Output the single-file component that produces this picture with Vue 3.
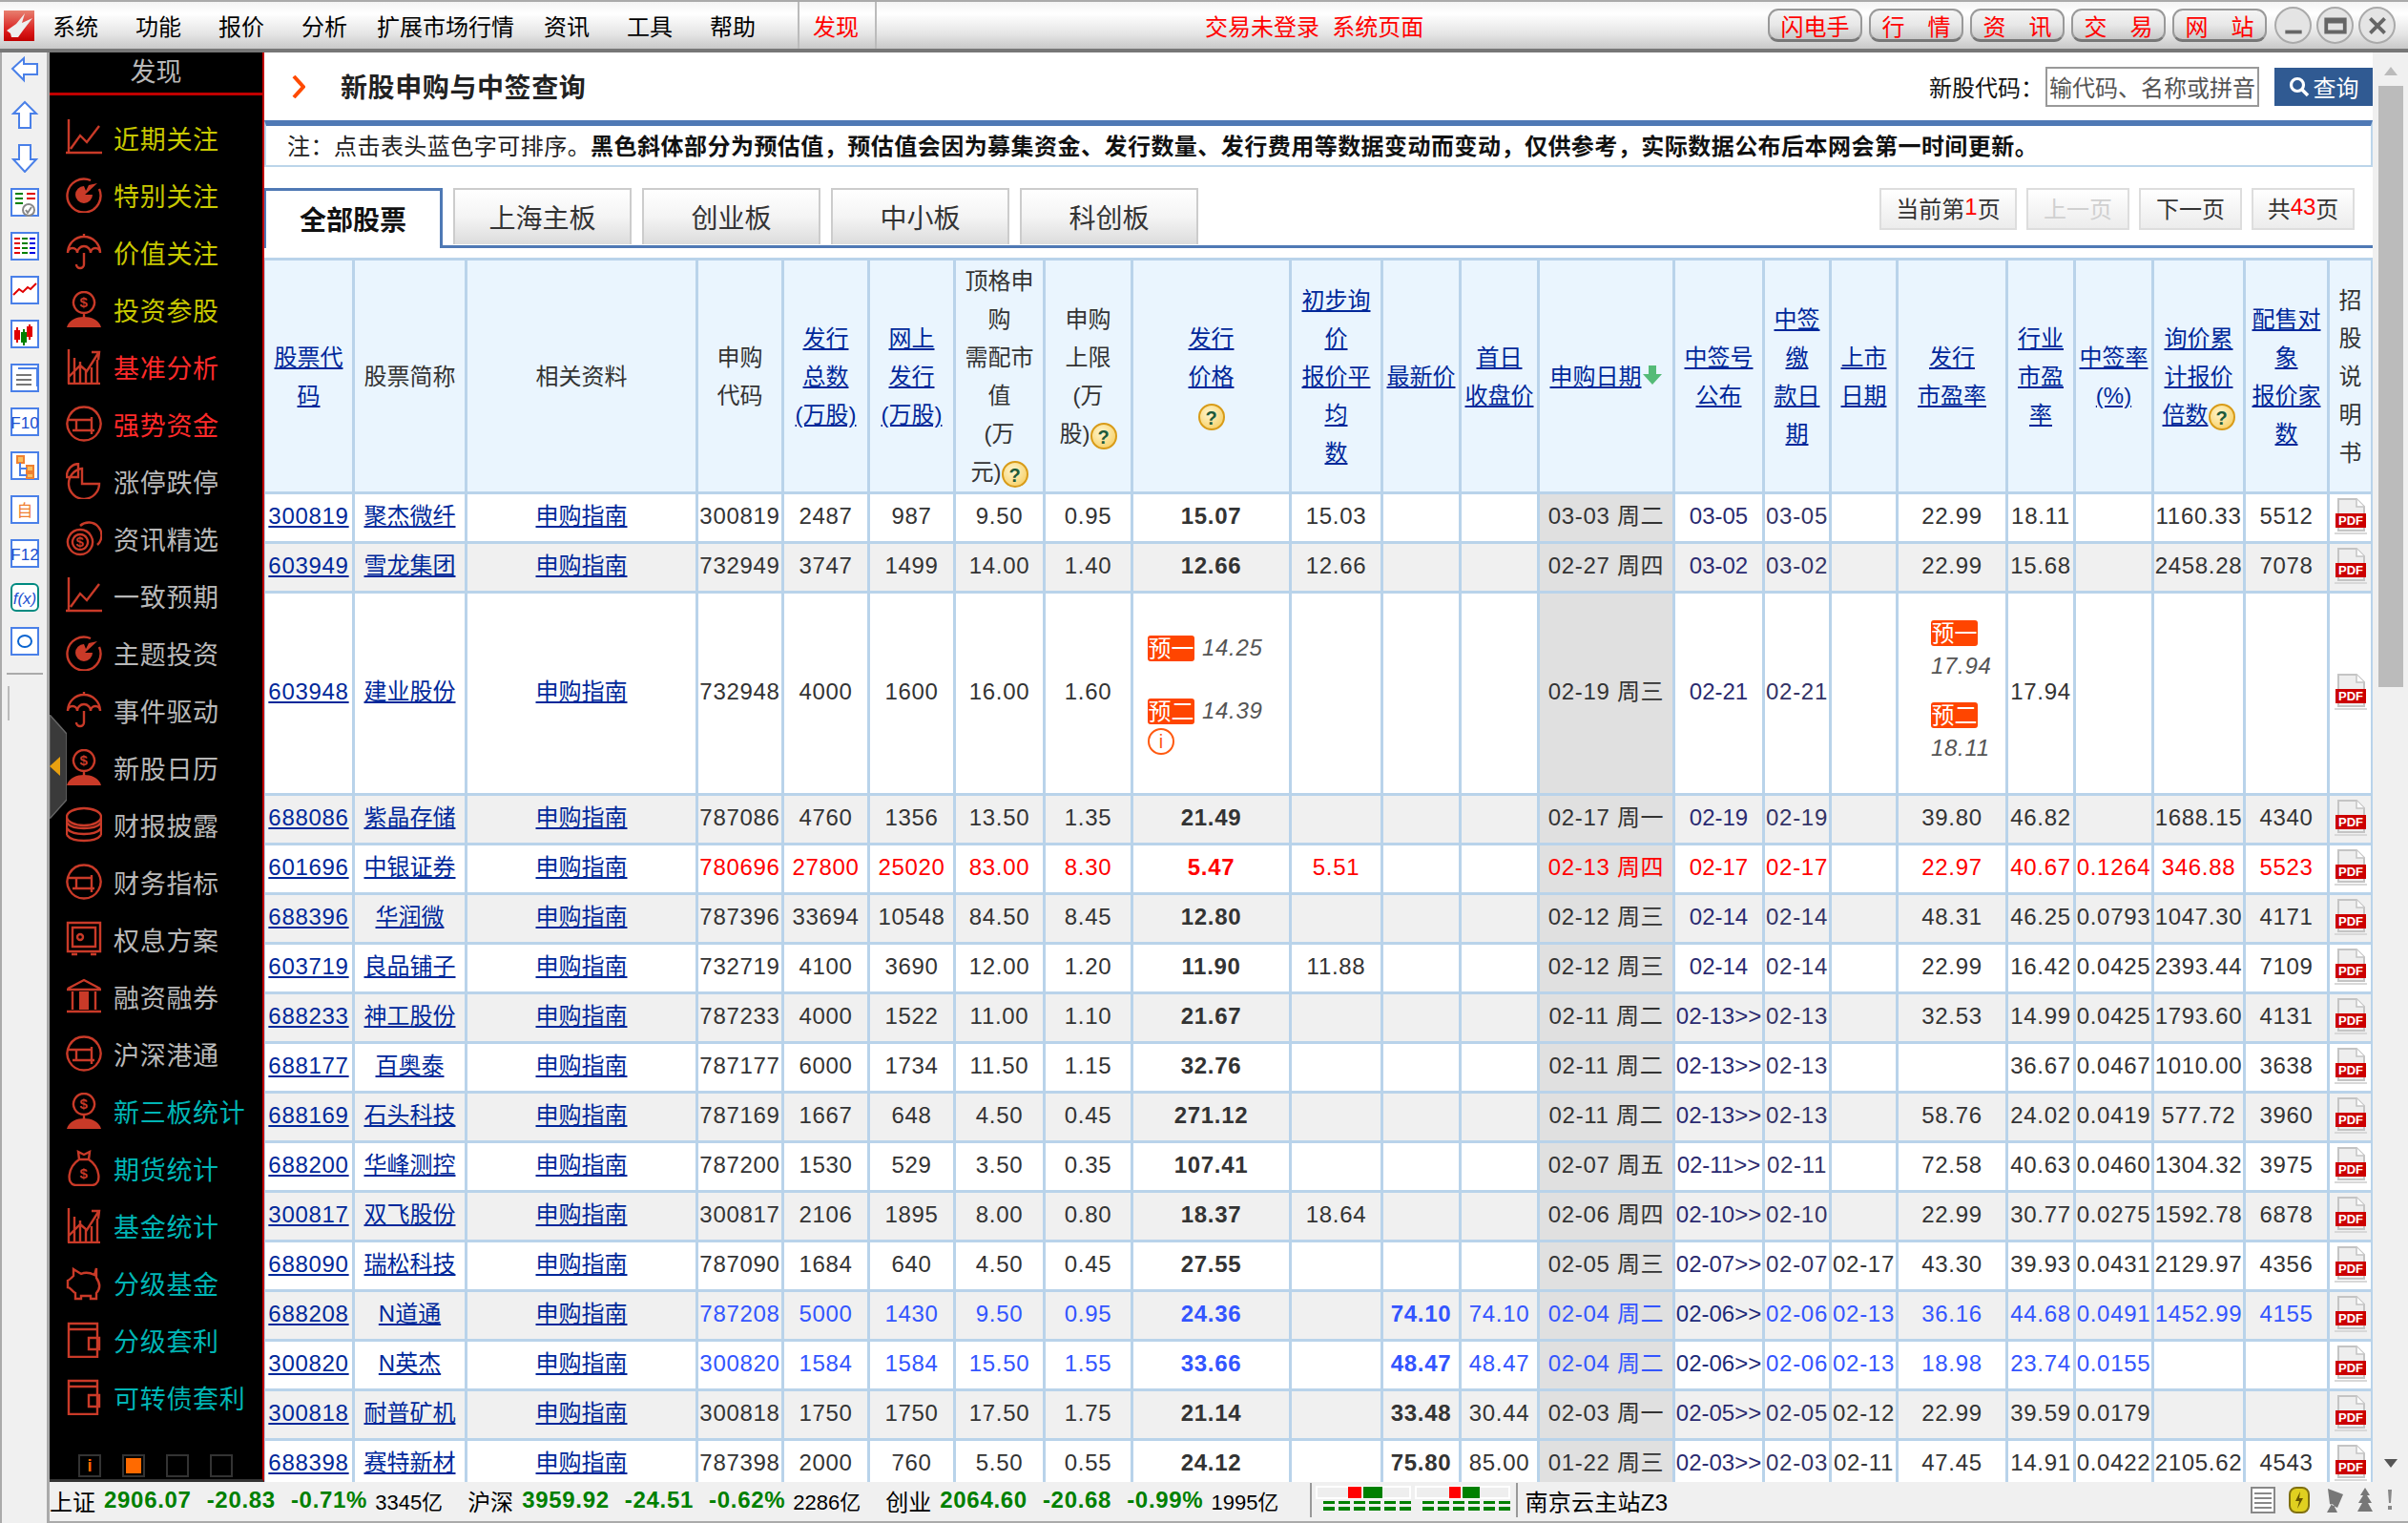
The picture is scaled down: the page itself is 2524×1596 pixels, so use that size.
<script setup>
const menus = ['系统', '功能', '报价', '分析', '扩展市场行情', '资讯', '工具', '帮助']
const quick = ['闪电手', '行　情', '资　讯', '交　易', '网　站']

// 左侧工具条
const tools = [
  { paths: [{ d: 'M2 13L14 2V8H28V19H14V25Z', c: '#4a80e8', f: '#fff' }] },
  { paths: [{ d: 'M15 2L27 14H21V29H9V14H3Z', c: '#4a80e8', f: '#fff' }] },
  { paths: [{ d: 'M9 1H21V16H27L15 29L3 16H9Z', c: '#4a80e8', f: '#fff' }] },
  { box: 1, paths: [
    { d: 'M5 6H13M5 11H13M5 16H13', c: '#008000' }, { d: 'M17 6H26M17 11H26', c: '#e00000' },
    { d: 'M13 23a6 6 0 1 1 12 0a6 6 0 1 1-12 0M16 23l2 3l4-6', c: '#888' }] },
  { box: 1, paths: [
    { d: 'M4 7H10M4 12H10M4 17H10M4 22H10', c: '#e00000' }, { d: 'M12 7H18M12 12H18M12 17H18M12 22H18', c: '#008000' },
    { d: 'M20 7H26M20 12H26M20 17H26M20 22H26', c: '#0000e0' }] },
  { box: 1, paths: [{ d: 'M3 20L9 14L13 17L18 12L21 14L27 8', c: '#e00000' }] },
  { box: 1, paths: [
    { d: 'M7 8V24M20 5V21', c: '#e00000' }, { d: 'M14 10V27', c: '#008000' }, { d: 'M5 12H9V20H5ZM18 8H22V17H18Z', c: '#e00000', f: '#e00000' },
    { d: 'M12 14H16V23H12Z', c: '#008000', f: '#008000' }] },
  { box: 1, paths: [{ d: 'M6 12H22M6 17H22M6 22H22', c: '#777' }, { d: 'M8 5H28V24', c: '#4a80e8' }] },
  { box: 1, text: 'F10', tc: '#1a4fd0' },
  { box: 1, paths: [{ d: 'M7 5H14V12H7ZM17 15H24V21H17ZM17 23H24V28H17Z', c: '#f08030', f: '#f8c060' }, { d: 'M10 12V25H17M10 18H17', c: '#4a80e8' }] },
  { box: 1, text: '自', tc: '#f08030' },
  { box: 1, text: 'F12', tc: '#1a4fd0' },
  { box: 1, teal: 1, text: 'f(x)', tc: '#1a4fd0', it: 1 },
  { box: 1, paths: [{ d: 'M8 15a7 6 0 1 1 14 0a7 6 0 1 1-14 0', c: '#0a64d0' }] },
]

// 侧边栏图标
const icons = {
  chart: { s: 'M3 0V34M0 35H38M5 31L15 17L22 24L35 7' },
  target: { s: 'M26 4A17.5 17.5 0 1 0 35 13', f: 'M19 10A9 9 0 1 0 28 19H20L33 7L24 9L21 15Z' },
  umbrella: { s: 'M2 20A17 17 0 0 1 36 20M19 0V4M19 20V32A4 4 0 0 1 11 32M2 20a5 5 0 0 1 10 0a7 7 0 0 1 14 0a5 5 0 0 1 10 0' },
  person: { s: 'M19 1a11 11 0 1 0 .01 0M19 23V28', f: 'M1 38C3 30 12 27 19 27S35 30 37 38Z', t: 1, tx: 19, ty: 17 },
  bars: { s: 'M3 1V37M2 37H36M9 10V36M15 14V36M21 24V36M27 20V36M33 12V36M3 30L15 18L22 24L34 5M27 4L35 4L34 12' },
  box: { s: 'M19 1.5a17.5 17.5 0 1 0 .01 0M3 15H27M11 15V26M7 26H30M27 12V30' },
  pie: { s: 'M17 6A16 16 0 1 0 35 22H17ZM13 1A13 13 0 0 0 1 15H13Z' },
  coin: { s: 'M15 10a13 13 0 1 0 .01 0M15 15a8 8 0 1 0 .01 0M15 6A12 12 0 0 1 33 26', t: 1, tx: 15, ty: 28 },
  stack: { s: 'M1 11A18 9 0 0 1 37 11A18 9 0 0 1 1 11M1 11V30M37 11V30M1 17c6 8 30 8 36 0M1 23c6 8 30 8 36 0M1 30c6 8 30 8 36 0', t: 1, tx: 19, ty: 15 },
  safe: { s: 'M2 2H36V32H2ZM7 7H31V27H7ZM12 17a3 3 0 1 0 6 0a3 3 0 1 0-6 0M6 35H12M26 35H32' },
  bank: { s: 'M2 11L19 2L36 11M1 12H37M1 35H37M7 14V33M31 14V33', f: 'M14 14H24V33H14Z' },
  bag: { s: 'M13 2L19 5L25 2L24 10H14ZM14 10C2 18 0 36 10 37H28C38 36 36 18 24 10', t: 1, tx: 19, ty: 30 },
  pig: { s: 'M8 5L16 10C20 8 26 9 30 11L32 4V14C36 20 36 26 32 30V36H26V33H16V36H10V30C6 28 5 24 2 24V17C4 16 6 14 8 12Z' },
  wallet: { s: 'M3 2H33V37H3ZM3 8H33M24 17H35V29H24Z' },
}

const yellow = '#c8c800'
const red = '#ff2a2a'
const grey = '#b8b8b8'
const teal = '#00b5b5'
const sideItems = [
  ['近期关注', 'chart', yellow], ['特别关注', 'target', yellow], ['价值关注', 'umbrella', yellow], ['投资参股', 'person', yellow],
  ['基准分析', 'bars', red], ['强势资金', 'box', red], ['涨停跌停', 'pie', grey], ['资讯精选', 'coin', grey],
  ['一致预期', 'chart', grey], ['主题投资', 'target', grey], ['事件驱动', 'umbrella', grey], ['新股日历', 'person', grey],
  ['财报披露', 'stack', grey], ['财务指标', 'box', grey], ['权息方案', 'safe', grey], ['融资融券', 'bank', grey],
  ['沪深港通', 'box', grey], ['新三板统计', 'person', teal], ['期货统计', 'bag', teal], ['基金统计', 'bars', teal],
  ['分级基金', 'pig', teal], ['分级套利', 'wallet', teal], ['可转债套利', 'wallet', teal],
]

const tabs = ['全部股票', '上海主板', '创业板', '中小板', '科创板']

const colWidths = [94, 118, 242, 90, 90, 90, 94, 92, 166, 96, 82, 82, 142, 94, 70, 70, 115, 71, 82, 96, 88, 46]

const heads = [
  { l: ['股票代', '码'], a: 1 },
  { l: ['股票简称'] },
  { l: ['相关资料'] },
  { l: ['申购', '代码'] },
  { l: ['发行', '总数', '(万股)'], a: 1 },
  { l: ['网上', '发行', '(万股)'], a: 1 },
  { l: ['顶格申', '购', '需配市', '值', '(万', '元)'], help: 1 },
  { l: ['申购', '上限', '(万', '股)'], help: 1 },
  { l: ['发行', '价格', ''], a: 1, help: 1 },
  { l: ['初步询', '价', '报价平', '均', '数'], a: 1 },
  { l: ['最新价'], a: 1 },
  { l: ['首日', '收盘价'], a: 1 },
  { l: ['申购日期'], a: 1, sort: 1 },
  { l: ['中签号', '公布'], a: 1 },
  { l: ['中签', '缴', '款日', '期'], a: 1 },
  { l: ['上市', '日期'], a: 1 },
  { l: ['发行', '市盈率'], a: 1 },
  { l: ['行业', '市盈', '率'], a: 1 },
  { l: ['中签率', '(%)'], a: 1 },
  { l: ['询价累', '计报价', '倍数'], a: 1, help: 1 },
  { l: ['配售对', '象', '报价家', '数'], a: 1 },
  { l: ['招', '股', '说', '明', '书'] },
]

// 代码 简称 申购代码 总数 网上 市值 上限 价格 初询 最新 首日 日期 号公布 缴款 上市 发行PE 行业PE 中签率 倍数 家数
const rows = [
  { d: ['300819', '聚杰微纤', '300819', '2487', '987', '9.50', '0.95', '15.07', '15.03', '', '', '03-03 周二', '03-05', '03-05', '', '22.99', '18.11', '', '1160.33', '5512'] },
  { d: ['603949', '雪龙集团', '732949', '3747', '1499', '14.00', '1.40', '12.66', '12.66', '', '', '02-27 周四', '03-02', '03-02', '', '22.99', '15.68', '', '2458.28', '7078'] },
  { est: 1, d: ['603948', '建业股份', '732948', '4000', '1600', '16.00', '1.60', '', '', '', '', '02-19 周三', '02-21', '02-21', '', '', '17.94', '', '', ''] },
  { d: ['688086', '紫晶存储', '787086', '4760', '1356', '13.50', '1.35', '21.49', '', '', '', '02-17 周一', '02-19', '02-19', '', '39.80', '46.82', '', '1688.15', '4340'] },
  { c: 'red', d: ['601696', '中银证券', '780696', '27800', '25020', '83.00', '8.30', '5.47', '5.51', '', '', '02-13 周四', '02-17', '02-17', '', '22.97', '40.67', '0.1264', '346.88', '5523'] },
  { d: ['688396', '华润微', '787396', '33694', '10548', '84.50', '8.45', '12.80', '', '', '', '02-12 周三', '02-14', '02-14', '', '48.31', '46.25', '0.0793', '1047.30', '4171'] },
  { d: ['603719', '良品铺子', '732719', '4100', '3690', '12.00', '1.20', '11.90', '11.88', '', '', '02-12 周三', '02-14', '02-14', '', '22.99', '16.42', '0.0425', '2393.44', '7109'] },
  { d: ['688233', '神工股份', '787233', '4000', '1522', '11.00', '1.10', '21.67', '', '', '', '02-11 周二', '02-13>>', '02-13', '', '32.53', '14.99', '0.0425', '1793.60', '4131'] },
  { d: ['688177', '百奥泰', '787177', '6000', '1734', '11.50', '1.15', '32.76', '', '', '', '02-11 周二', '02-13>>', '02-13', '', '', '36.67', '0.0467', '1010.00', '3638'] },
  { d: ['688169', '石头科技', '787169', '1667', '648', '4.50', '0.45', '271.12', '', '', '', '02-11 周二', '02-13>>', '02-13', '', '58.76', '24.02', '0.0419', '577.72', '3960'] },
  { d: ['688200', '华峰测控', '787200', '1530', '529', '3.50', '0.35', '107.41', '', '', '', '02-07 周五', '02-11>>', '02-11', '', '72.58', '40.63', '0.0460', '1304.32', '3975'] },
  { d: ['300817', '双飞股份', '300817', '2106', '1895', '8.00', '0.80', '18.37', '18.64', '', '', '02-06 周四', '02-10>>', '02-10', '', '22.99', '30.77', '0.0275', '1592.78', '6878'] },
  { d: ['688090', '瑞松科技', '787090', '1684', '640', '4.50', '0.45', '27.55', '', '', '', '02-05 周三', '02-07>>', '02-07', '02-17', '43.30', '39.93', '0.0431', '2129.97', '4356'] },
  { c: 'blue', d: ['688208', 'N道通', '787208', '5000', '1430', '9.50', '0.95', '24.36', '', '74.10', '74.10', '02-04 周二', '02-06>>', '02-06', '02-13', '36.16', '44.68', '0.0491', '1452.99', '4155'] },
  { c: 'blue', d: ['300820', 'N英杰', '300820', '1584', '1584', '15.50', '1.55', '33.66', '', '48.47', '48.47', '02-04 周二', '02-06>>', '02-06', '02-13', '18.98', '23.74', '0.0155', '', ''] },
  { d: ['300818', '耐普矿机', '300818', '1750', '1750', '17.50', '1.75', '21.14', '', '33.48', '30.44', '02-03 周一', '02-05>>', '02-05', '02-12', '22.99', '39.59', '0.0179', '', ''] },
  { d: ['688398', '赛特新材', '787398', '2000', '760', '5.50', '0.55', '24.12', '', '75.80', '85.00', '01-22 周三', '02-03>>', '02-03', '02-11', '47.45', '14.91', '0.0422', '2105.62', '4543'] },
]

const indices = [
  { name: '上证', v: ['2906.07', '-20.83', '-0.71%'], amt: '3345亿' },
  { name: '沪深', v: ['3959.92', '-24.51', '-0.62%'], amt: '2286亿' },
  { name: '创业', v: ['2064.60', '-20.68', '-0.99%'], amt: '1995亿' },
]
const dashes = [0, 1, 2, 3, 4, 5]
</script>

<template>
  <div class="app">
    <header class="topbar">
      <svg class="logo" viewBox="0 0 32 32">
        <defs>
          <linearGradient id="lg" x1="0" y1="0" x2="0" y2="1">
            <stop offset="0" stop-color="#e88070" />
            <stop offset="0.7" stop-color="#d81818" />
            <stop offset="1" stop-color="#c00000" />
          </linearGradient>
        </defs>
        <rect width="32" height="32" fill="url(#lg)" />
        <path d="M3 21L13 14L22 3L19 13L30 8L20 21L15 28L8 28L7 24Z" fill="#eee" />
      </svg>
      <nav class="menu">
        <span v-for="m in menus" :key="m" :class="{ long: m.length > 2 }">{{ m }}</span>
      </nav>
      <span class="found">发现</span>
      <span class="login">交易未登录&nbsp;&nbsp;系统页面</span>
      <div class="quick">
        <span v-for="q in quick" :key="q" class="qbtn">{{ q }}</span>
      </div>
      <div class="winbtns">
        <span class="wbtn"><svg viewBox="0 0 24 24"><path d="M4 18H20" /></svg></span>
        <span class="wbtn"><svg viewBox="0 0 24 24"><path d="M3 6H21V18H3ZM3 8H21" /></svg></span>
        <span class="wbtn"><svg viewBox="0 0 24 24"><path d="M5 5L19 19M19 5L5 19" /></svg></span>
      </div>
    </header>

    <div class="body">
      <aside class="tools">
        <template v-for="(t, i) in tools" :key="i">
          <svg class="tool" viewBox="0 0 30 30">
            <rect v-if="t.box" x="1" y="1" width="28" height="28" fill="#fff" :stroke="t.teal ? '#008a80' : '#4a80e8'" stroke-width="2" :rx="t.teal ? 5 : 0" />
            <path v-for="(p, j) in t.paths" :key="j" :d="p.d" :stroke="p.c" :fill="p.f || 'none'" stroke-width="2" />
            <text v-if="t.text" x="15" y="22" text-anchor="middle" font-size="17" :font-style="t.it ? 'italic' : 'normal'" font-family="'Liberation Sans','Noto Sans CJK SC',sans-serif" :fill="t.tc">{{ t.text }}</text>
          </svg>
        </template>
        <div class="tool-sep"></div>
        <div class="tool-grip"></div>
      </aside>

      <div class="right">
        <div class="main">
          <aside class="side">
            <div class="side-head">发现</div>
            <ul class="side-list">
              <li v-for="s in sideItems" :key="s[0]">
                <svg class="sicon" viewBox="0 0 38 38">
                  <path v-if="icons[s[1]].f" :d="icons[s[1]].f" fill="#c93a28" />
                  <path :d="icons[s[1]].s" fill="none" stroke="#c93a28" stroke-width="2.4" />
                  <text v-if="icons[s[1]].t" :x="icons[s[1]].tx" :y="icons[s[1]].ty" text-anchor="middle" font-size="15" font-weight="700" font-family="'Liberation Sans',sans-serif" :fill="s[1] === 'stack' ? '#000' : '#c93a28'">$</text>
                </svg>
                <span :style="{ color: s[2] }">{{ s[0] }}</span>
              </li>
            </ul>
            <div class="side-pager">
              <span class="sq info">i</span>
              <span class="sq on"></span>
              <span class="sq"></span>
              <span class="sq"></span>
            </div>
            <div class="collapse">
              <svg viewBox="0 0 18 109">
                <path d="M0 0L18 20V89L0 109Z" fill="#3a3a3a" stroke="#666" stroke-width="1.5" />
                <path d="M0 54L11 44V64Z" fill="#e8a010" />
              </svg>
            </div>
          </aside>

          <section class="content">
            <div class="title-row">
              <svg class="chev" viewBox="0 0 14 24"><path d="M2 1L12 12L2 23" fill="none" stroke="#ff4a00" stroke-width="4" /></svg>
              <h1>新股申购与中签查询</h1>
              <div class="search">
                <label>新股代码：</label>
                <input value="输代码、名称或拼音" readonly />
                <button>
                  <svg viewBox="0 0 22 22"><circle cx="9" cy="9" r="6.5" fill="none" stroke="#fff" stroke-width="3.2" /><path d="M13 13L20 20" stroke="#fff" stroke-width="3.6" /></svg>
                  查询
                </button>
              </div>
            </div>
            <div class="note">注：点击表头蓝色字可排序。<b>黑色斜体部分为预估值，预估值会因为募集资金、发行数量、发行费用等数据变动而变动，仅供参考，实际数据公布后本网会第一时间更新。</b></div>

            <div class="tabbar">
              <span v-for="(t, i) in tabs" :key="t" class="tab" :class="{ active: i === 0 }">{{ t }}</span>
              <div class="pager">
                <span class="pg w1">当前第<em>1</em>页</span>
                <span class="pg off">上一页</span>
                <span class="pg">下一页</span>
                <span class="pg">共<em>43</em>页</span>
              </div>
            </div>

            <div class="table-wrap">
              <table>
                <colgroup>
                  <col v-for="(w, i) in colWidths" :key="i" :style="{ width: w + 'px' }" />
                </colgroup>
                <thead>
                  <tr>
                    <th v-for="(h, i) in heads" :key="i">
                      <component :is="h.a ? 'a' : 'span'">
                        <template v-for="(line, j) in h.l" :key="j">
                          {{ line }}<template v-if="j === h.l.length - 1">
                            <i v-if="h.help" class="help">?</i>
                            <svg v-if="h.sort" class="sort" viewBox="0 0 22 20"><path d="M7 0H15V9H21L11 20L1 9H7Z" fill="#55bb77" /></svg>
                          </template><br v-else />
                        </template>
                      </component>
                    </th>
                  </tr>
                </thead>
                <tbody>
                  <tr v-for="(r, i) in rows" :key="r.d[0]" :class="[r.c, { tall: r.est, alt: i % 2 }]">
                    <td class="num"><a>{{ r.d[0] }}</a></td>
                    <td><a>{{ r.d[1] }}</a></td>
                    <td><a>申购指南</a></td>
                    <td v-for="n in [2, 3, 4, 5, 6]" :key="n" class="num">{{ r.d[n] }}</td>
                    <td v-if="r.est" class="est">
                      <div class="est-line"><span class="badge">预一</span> <i>14.25</i></div>
                      <div class="est-line"><span class="badge">预二</span> <i>14.39</i></div>
                      <span class="info-i">i</span>
                    </td>
                    <td v-else class="num strong">{{ r.d[7] }}</td>
                    <td class="num">{{ r.d[8] }}</td>
                    <td class="num strong">{{ r.d[9] }}</td>
                    <td class="num">{{ r.d[10] }}</td>
                    <td class="num date">{{ r.d[11] }}</td>
                    <td class="num pub">{{ r.d[12] }}</td>
                    <td class="num pay">{{ r.d[13] }}</td>
                    <td class="num">{{ r.d[14] }}</td>
                    <td v-if="r.est" class="est pe">
                      <span class="badge">预一</span><i>17.94</i>
                      <span class="badge two">预二</span><i>18.11</i>
                    </td>
                    <td v-else class="num">{{ r.d[15] }}</td>
                    <td class="num">{{ r.d[16] }}</td>
                    <td class="num">{{ r.d[17] }}</td>
                    <td class="num">{{ r.d[18] }}</td>
                    <td class="num">{{ r.d[19] }}</td>
                    <td class="pdf">
                      <svg viewBox="0 0 36 40">
                        <path d="M5 1H24L32 9V34H5Z" fill="#eee" stroke="#c4c4c4" stroke-width="2" />
                        <path d="M24 1V9H32" fill="#fff" stroke="#c4c4c4" stroke-width="1.5" />
                        <rect x="2" y="16" width="32" height="15" fill="#cc0000" />
                        <text x="18" y="28" text-anchor="middle" font-size="13" font-weight="700" font-family="'Liberation Sans',sans-serif" fill="#fff">PDF</text>
                        <path d="M1 37H35" stroke="#d8d8d8" stroke-width="2" />
                      </svg>
                    </td>
                  </tr>
                </tbody>
              </table>
            </div>
          </section>

          <div class="scroll">
            <svg class="arrow" viewBox="0 0 14 9"><path d="M7 0L14 9H0Z" fill="#bbb" /></svg>
            <div class="thumb"></div>
            <svg class="arrow down" viewBox="0 0 14 9"><path d="M7 9L14 0H0Z" fill="#555" /></svg>
          </div>
        </div>

        <footer class="status">
          <div v-for="x in indices" :key="x.name" class="idx">
            <span class="idx-name">{{ x.name }}</span>
            <b v-for="v in x.v" :key="v">{{ v }}</b>
            <span class="idx-amt">{{ x.amt }}</span>
          </div>
          <div class="meter">
            <svg viewBox="0 0 206 30" width="206" height="30">
              <rect x="1" y="1" width="98" height="12" fill="#eee" stroke="#fff" stroke-width="2" />
              <rect x="34" y="1" width="14" height="12" fill="#ff0000" />
              <rect x="50" y="1" width="20" height="12" fill="#008000" />
              <rect x="105" y="1" width="98" height="12" fill="#eee" stroke="#fff" stroke-width="2" />
              <rect x="140" y="1" width="12" height="12" fill="#ff0000" />
              <rect x="154" y="1" width="18" height="12" fill="#008000" />
              <template v-for="k in dashes" :key="k">
                <rect :x="8 + k * 16" y="16" width="12" height="3" fill="#008000" />
                <rect :x="8 + k * 16" y="22" width="12" height="4" fill="#008000" />
                <rect :x="112 + k * 16" y="16" width="12" height="3" fill="#008000" />
                <rect :x="112 + k * 16" y="22" width="12" height="4" fill="#008000" />
              </template>
            </svg>
          </div>
          <span class="station">南京云主站Z3</span>
          <div class="tray">
            <svg width="28" height="28" viewBox="0 0 28 28"><path d="M2 1H26V27H2ZM5 7H23M5 12H23M5 17H23M5 22H23" fill="#fff" stroke="#888" stroke-width="2" /></svg>
            <svg width="24" height="28" viewBox="0 0 24 28"><rect x="2" y="1" width="20" height="26" rx="7" fill="#e0d020" stroke="#807010" stroke-width="2" /><path d="M13 5L8 15H12L10 23L16 12H12Z" fill="#665500" /></svg>
            <svg width="24" height="28" viewBox="0 0 24 28"><path d="M6 2L22 8L16 22L8 18ZM10 18L5 27H16L12 19" fill="#777" /></svg>
            <svg width="18" height="28" viewBox="0 0 18 28"><path d="M9 1L14 9H11L16 17H12L17 26H1L6 17H2L7 9H4Z" fill="#777" /></svg>
            <svg width="10" height="28" viewBox="0 0 10 28"><path d="M3 3H7L6 17H4ZM3 20H7V24H3Z" fill="#888" /></svg>
          </div>
        </footer>
      </div>
    </div>
  </div>
</template>

<style scoped>
.app {
  width: 2524px;
  height: 1596px;
  display: flex;
  flex-direction: column;
  background: #fff;
  overflow: hidden;
  font-family: "Liberation Sans", "Noto Sans CJK SC", sans-serif;
  font-size: 24px;
  color: #333;
}

/* 顶部菜单 */
.topbar {
  height: 55px;
  box-sizing: border-box;
  flex: none;
  display: flex;
  align-items: center;
  border-top: 2px solid #aaa;
  border-bottom: 4px solid #777;
  background: linear-gradient(#f4f4f4, #fff 25%, #e4e4e4 70%, #c8c8c8);
  padding-left: 4px;
  color: #000;
}
.logo {
  width: 32px;
  height: 32px;
  flex: none;
}
.menu {
  display: flex;
  gap: 39px;
  margin-left: 19px;
  padding-right: 44px;
  border-right: 2px solid #bbb;
  height: 100%;
  align-items: center;
}
.menu .long {
  margin: 0 -8px;
}
.found {
  color: #f00;
  padding: 0 17px 0 14px;
  border-right: 2px solid #bbb;
  height: 100%;
  display: flex;
  align-items: center;
}
.login {
  color: #f00;
  margin-left: 344px;
}
.quick {
  display: flex;
  gap: 7px;
  margin-left: auto;
}
.qbtn {
  width: 99px;
  height: 35px;
  box-sizing: border-box;
  border: 2px solid #999;
  border-bottom: 3px solid #777;
  border-radius: 11px;
  background: linear-gradient(#f4f4f4, #e8e8e8 50%, #c8c8c8);
  color: #f00;
  display: flex;
  align-items: center;
  justify-content: center;
}
.winbtns {
  display: flex;
  gap: 5px;
  margin: 0 13px 0 8px;
}
.wbtn {
  width: 39px;
  height: 39px;
  box-sizing: border-box;
  border: 2px solid #aaa;
  border-radius: 50%;
  background: #e4e4e4;
  display: flex;
  align-items: center;
  justify-content: center;
}
.wbtn svg {
  width: 26px;
  height: 26px;
  fill: none;
  stroke: #666;
  stroke-width: 3.5;
}

.body {
  flex: 1;
  display: flex;
  min-height: 0;
}

/* 左侧工具条 */
.tools {
  width: 52px;
  flex: none;
  box-sizing: border-box;
  background: #f0f0f0;
  border-left: 2px solid #aaa;
  border-right: 3px solid #aaa;
  display: flex;
  flex-direction: column;
  align-items: center;
  gap: 16px;
  padding-top: 4px;
}
.tool {
  width: 30px;
  height: 30px;
  flex: none;
}
.tool-sep {
  width: 38px;
  height: 2px;
  background: #aaa;
  margin-top: 2px;
}
.tool-grip {
  width: 2px;
  height: 36px;
  background: #bbb;
  align-self: flex-start;
  margin-left: 6px;
  margin-top: -4px;
}

.right {
  flex: 1;
  min-width: 0;
  display: flex;
  flex-direction: column;
}
.main {
  flex: 1;
  min-height: 0;
  display: flex;
}

/* 发现侧边栏 */
.side {
  width: 225px;
  flex: none;
  box-sizing: border-box;
  background: #000;
  border-right: 2px solid #c00000;
  border-bottom: 3px solid #333;
  display: flex;
  flex-direction: column;
  position: relative;
}
.side-head {
  height: 42px;
  line-height: 42px;
  border-bottom: 3px solid #c00000;
  text-align: center;
  font-size: 27px;
  color: #b8b8b8;
}
.side-list {
  list-style: none;
  margin: 0;
  padding: 14px 0 0 17px;
  flex: 1;
}
.side-list li {
  height: 60px;
  display: flex;
  align-items: center;
  gap: 12px;
  font-size: 27px;
  letter-spacing: 0.7px;
  white-space: nowrap;
}
.sicon {
  width: 38px;
  height: 38px;
  flex: none;
}
.side-pager {
  display: flex;
  gap: 22px;
  padding-left: 30px;
  margin-bottom: 2px;
}
.sq {
  width: 24px;
  height: 24px;
  box-sizing: border-box;
  border: 2px solid #333;
  color: #ff6a00;
  font-size: 18px;
  font-weight: 700;
  line-height: 20px;
  text-align: center;
}
.sq.on {
  background: #ff6a00;
  background-clip: content-box;
  padding: 2px;
}
.collapse {
  position: absolute;
  left: 0;
  top: 694px;
  width: 18px;
  height: 109px;
}
.collapse svg {
  display: block;
  width: 100%;
  height: 100%;
}

/* 内容区 */
.content {
  flex: 1;
  min-width: 0;
  display: flex;
  flex-direction: column;
}
.title-row {
  height: 71px;
  flex: none;
  display: flex;
  align-items: center;
  padding-left: 29px;
}
.chev {
  width: 14px;
  height: 24px;
  flex: none;
}
.title-row h1 {
  margin: 0 0 2px 37px;
  font-size: 28px;
  font-weight: 700;
  color: #222;
  letter-spacing: 0.6px;
}
.search {
  margin-left: auto;
  display: flex;
  align-items: center;
  color: #111;
}
.search input {
  width: 224px;
  height: 42px;
  box-sizing: border-box;
  border: 2px solid #999;
  padding: 0 2px;
  margin: 0 16px 0 2px;
  font: inherit;
  color: #555;
  outline: none;
}
.search button {
  width: 103px;
  height: 40px;
  border: 0;
  background: #305a92;
  color: #fff;
  font: inherit;
  display: flex;
  align-items: center;
  justify-content: center;
  gap: 4px;
  padding: 0;
}
.search button svg {
  width: 22px;
  height: 22px;
}
.note {
  flex: none;
  box-sizing: border-box;
  border-top: 6px solid #4f79b5;
  border-left: 2px solid #bcd5ea;
  border-right: 2px solid #bcd5ea;
  border-bottom: 2px solid #bcd5ea;
  height: 49px;
  line-height: 44px;
  padding-left: 22px;
  letter-spacing: 0.47px;
  color: #222;
  white-space: nowrap;
}
.note b {
  color: #111;
}

.tabbar {
  height: 63px;
  flex: none;
  box-sizing: border-box;
  margin-top: 22px;
  border-bottom: 3px solid #4f79b5;
  display: flex;
  gap: 11px;
  align-items: flex-start;
}
.tab {
  width: 187px;
  height: 59px;
  box-sizing: border-box;
  border: 2px solid #ccc;
  border-bottom: 0;
  background: linear-gradient(#fff, #f4f4f4 50%, #dcdcdc);
  font-size: 28px;
  color: #333;
  display: flex;
  align-items: center;
  justify-content: center;
  padding-bottom: 2px;
}
.tab.active {
  height: 63px;
  border: 3px solid #4f79b5;
  border-left: 2px solid #4f79b5;
  border-bottom: 0;
  background: #fff;
  font-weight: 700;
  color: #111;
  position: relative;
}
.pager {
  margin-left: auto;
  margin-right: 19px;
  display: flex;
  gap: 10px;
}
.pg {
  width: 108px;
  height: 44px;
  box-sizing: border-box;
  border: 2px solid #ddd;
  background: linear-gradient(#fff, #ececec);
  display: flex;
  align-items: center;
  justify-content: center;
  color: #333;
  padding-bottom: 4px;
}
.pg.w1 {
  width: 144px;
}
.pg.off {
  color: #d0d0d0;
}
.pg em {
  color: #f00;
  font-style: normal;
}

/* 表格 */
.table-wrap {
  margin-top: 10px;
  margin-left: -2px;
  flex: 1;
  min-height: 0;
  overflow: hidden;
}
table {
  width: 2210px;
  table-layout: fixed;
  border-collapse: collapse;
  border: 3px solid #b9d3ea;
}
th,
td {
  border: 3px solid #b9d3ea;
  padding: 0;
  text-align: center;
  overflow: hidden;
  white-space: nowrap;
}
thead tr {
  height: 242px;
}
th {
  background: #eaf5fe;
  font-weight: 400;
  line-height: 40px;
  color: #333;
  padding-top: 2px;
}
tbody tr {
  height: 52px;
}
tbody tr.tall {
  height: 212px;
}
tbody td {
  line-height: 30px;
  padding-bottom: 4px;
}
tbody tr.alt td {
  background: #f0f0f0;
}
a {
  color: #00289a;
  text-decoration: underline;
}
.num {
  letter-spacing: 0.7px;
  color: #333;
}
.strong {
  font-weight: 700;
}
td.date,
tbody tr.alt td.date {
  background: #e0e0e0;
}
.pub {
  color: #2a2a70;
  letter-spacing: 0;
}
.pay {
  color: #333366;
}
.red .num {
  color: #f00;
}
.blue .num {
  color: #3355ff;
}
.blue .pub {
  color: #1c2a7a;
}
.help {
  display: inline-block;
  width: 28px;
  height: 28px;
  line-height: 26px;
  border-radius: 50%;
  border: 2px solid #d89b18;
  box-sizing: border-box;
  background: radial-gradient(circle at 40% 35%, #fff6d0, #f5c850);
  color: #1d5a3a;
  font-size: 20px;
  font-weight: 700;
  font-style: normal;
  text-align: center;
  vertical-align: -2px;
}
.sort {
  width: 22px;
  height: 20px;
  vertical-align: 0;
}
td.est {
  text-align: left;
  padding-left: 15px;
  padding-top: 3px;
  padding-bottom: 0;
}
.est i {
  color: #555;
  letter-spacing: 0.7px;
}
.est-line {
  height: 28px;
  line-height: 28px;
  margin-bottom: 38px;
  display: flex;
  align-items: center;
  gap: 8px;
}
.est-line + .est-line {
  margin-bottom: 4px;
}
.badge {
  display: inline-block;
  width: 49px;
  height: 27px;
  line-height: 27px;
  background: #ff4500;
  border-radius: 3px;
  color: #fff;
  text-align: center;
  overflow: hidden;
}
.info-i {
  display: block;
  width: 28px;
  height: 28px;
  box-sizing: border-box;
  border: 2px solid #ff5a10;
  border-radius: 50%;
  color: #ff5a10;
  line-height: 24px;
  text-align: center;
  font-size: 20px;
}
td.pe {
  padding-left: 34px;
  padding-top: 0;
  padding-bottom: 8px;
}
.pe i {
  display: block;
  height: 25px;
  line-height: 28px;
}
.pe .badge.two {
  margin-top: 27px;
}
.pdf svg {
  display: block;
  width: 36px;
  height: 40px;
  margin: 2px auto 0;
}

/* 滚动条 */
.scroll {
  width: 37px;
  flex: none;
  background: #f0f0f0;
  display: flex;
  flex-direction: column;
  align-items: center;
  padding-top: 15px;
  position: relative;
  box-sizing: border-box;
}
.arrow {
  width: 14px;
  height: 9px;
  flex: none;
}
.thumb {
  width: 26px;
  height: 630px;
  background: #bbb;
  margin-top: 11px;
}
.arrow.down {
  margin-top: auto;
  margin-bottom: 15px;
}

/* 状态栏 */
.status {
  height: 43px;
  flex: none;
  box-sizing: border-box;
  background: #f0f0f0;
  border-bottom: 2px solid #aaa;
  display: flex;
  align-items: center;
  color: #000;
  white-space: nowrap;
  padding-bottom: 3px;
}
.idx {
  display: flex;
  align-items: center;
  margin-right: 26px;
}
.idx b {
  color: #008000;
  font-size: 24px;
  letter-spacing: 0.7px;
  margin-left: 16px;
}
.idx-name + b {
  margin-left: 9px;
}
.idx-amt {
  margin-left: 8px;
  font-size: 22px;
}
.meter {
  border-left: 2px solid #999;
  border-right: 2px solid #999;
  padding: 0 4px;
  height: 36px;
  display: flex;
  align-items: center;
  margin-left: 7px;
}
.station {
  margin-left: 7px;
  letter-spacing: 0.3px;
}
.tray {
  margin-left: auto;
  margin-right: 14px;
  display: flex;
  gap: 12px;
  align-items: center;
}
</style>

<style>
html,
body {
  margin: 0;
  overflow: hidden;
}
</style>
